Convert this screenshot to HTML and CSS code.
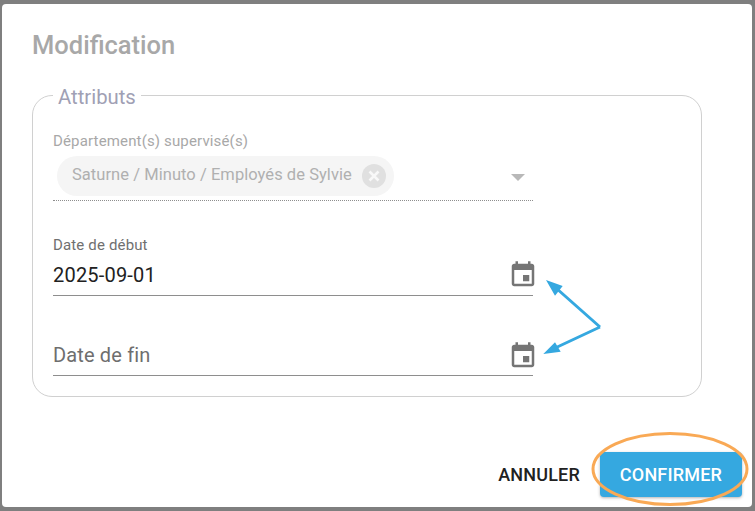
FILE: index.html
```html
<!DOCTYPE html>
<html lang="fr">
<head>
<meta charset="utf-8">
<title>Modification</title>
<link rel="stylesheet" href="styles.css">
</head>
<body>
<div class="dialog">
  <h2 class="title">Modification</h2>
  <fieldset class="group">
    <legend class="legend">Attributs</legend>
    <div class="field field-select">
      <div class="label">Département(s) supervisé(s)</div>
      <div class="select-row">
        <span class="chip">
          <span class="chip-text">Saturne / Minuto / Employés de Sylvie</span>
          <svg class="chip-x" viewBox="0 0 24 24"><circle cx="12" cy="12" r="12" fill="#e0e0e0"/><path d="M7.5 7.5l9 9M16.500 7.500l-9 9" stroke="#f8f8f8" stroke-width="2.600" fill="none"/></svg>
        </span>
        <span class="caret"></span>
      </div>
    </div>
    <div class="field field-date">
      <div class="label label-dark">Date de début</div>
      <div class="date-row">
        <span class="value">2025-09-01</span>
        <svg class="cal" viewBox="0 0 24 24"><path fill="#757575" d="M19 3h-1V1h-2v2H8V1H6v2H5c-1.110 0-2 .9-2 2v14c0 1.100.89 2 2 2h14c1.100 0 2-.9 2-2V5c0-1.100-.9-2-2-2zm0 16H5V8h14v11zM17 12h-5v5h5v-5z"/></svg>
      </div>
    </div>
    <div class="field field-end">
      <div class="date-row">
        <span class="placeholder">Date de fin</span>
        <svg class="cal" viewBox="0 0 24 24"><path fill="#757575" d="M19 3h-1V1h-2v2H8V1H6v2H5c-1.110 0-2 .9-2 2v14c0 1.100.89 2 2 2h14c1.100 0 2-.9 2-2V5c0-1.100-.9-2-2-2zm0 16H5V8h14v11zM17 12h-5v5h5v-5z"/></svg>
      </div>
    </div>
  </fieldset>
  <div class="actions">
    <button class="btn btn-text">ANNULER</button>
    <button class="btn btn-primary">CONFIRMER</button>
  </div>
</div>
<svg class="annotations" viewBox="0 0 755 511" width="755" height="511">
  <path d="M600 327L556 288M600 327L553 349" stroke="#35a8e0" stroke-width="3" fill="none"/>
  <path d="M546 280L562.700 286L555 295.700Z M543.300 354L555 342.300L560.700 351.700Z" fill="#35a8e0"/>
  <ellipse cx="670" cy="469" rx="77" ry="35.500" stroke="#f9a955" stroke-width="3" fill="none"/>
</svg>
</body>
</html>
```
FILE: styles.css
```css
html, body {
  margin: 0;
  height: 100%;
}
body {
  background: #7f7f7f;
  overflow: hidden;
  font-family: Roboto, "Liberation Sans", sans-serif;
}
.dialog {
  box-sizing: border-box;
  margin: 4px 3px 0 2px;
  height: 503px;
  background: #fff;
  border-radius: 4px;
  padding: 27px 10px 10px 30px;
  display: flex;
  flex-direction: column;
}
.title {
  margin: 0;
  font-size: 25.500px;
  line-height: 28px;
  font-weight: 500;
  color: #a8a8a8;
}
.group {
  margin: 23px 40px 0 0;
  padding: 0 20px;
  height: 315px;
  box-sizing: border-box;
  border: 1px solid #d0d0d0;
  border-radius: 20px;
  min-width: 0;
}
.legend {
  margin-left: 0;
  padding: 4px 5px 0;
  font-size: 20.300px;
  line-height: 23px;
  color: #a0a0b4;
}
.field {
  width: 480px;
}
.field-select {
  margin-top: 23px;
  border-bottom: 1px dotted #8e8e8e;
  height: 69px;
  box-sizing: border-box;
}
.label {
  font-size: 15px;
  line-height: 18px;
  color: #a8a8a8;
  letter-spacing: .15px;
}
.label-dark {
  color: #707070;
}
.select-row {
  margin-top: 6px;
  padding-left: 4px;
  display: flex;
  align-items: center;
  justify-content: space-between;
}
.chip {
  display: flex;
  align-items: center;
  height: 40px;
  padding: 0 8px 0 15px;
  border-radius: 20px;
  background: #f5f5f5;
}
.chip-text {
  font-size: 16.500px;
  letter-spacing: .05px;
  color: #b0b0b0;
  margin-right: 10px;
  padding-bottom: 4px;
}
.chip-x {
  width: 24px;
  height: 24px;
  display: block;
}
.caret {
  margin-right: 8px;
  margin-top: 3px;
  width: 0;
  height: 0;
  border-left: 7px solid transparent;
  border-right: 7px solid transparent;
  border-top: 7px solid #b8b8b8;
}
.field-date {
  margin-top: 35px;
  height: 60px;
  box-sizing: border-box;
  border-bottom: 1px solid #8e8e8e;
}
.date-row {
  display: flex;
  align-items: center;
  justify-content: space-between;
  height: 40px;
}
.field-date .date-row {
  height: 42px;
}
.value {
  font-size: 20px;
  letter-spacing: .2px;
  color: #212121;
}
.placeholder {
  font-size: 20px;
  letter-spacing: .15px;
  color: #6e6e6e;
}
.cal {
  width: 30px;
  height: 30px;
  display: block;
  margin-right: -5px;
}
.field-end {
  margin-top: 20px;
  height: 60px;
  box-sizing: border-box;
  border-bottom: 1px solid #8e8e8e;
  display: flex;
  align-items: flex-end;
}
.field-end .date-row {
  width: 100%;
}
.field-end .cal {
  margin-top: 2px;
}
.actions {
  margin-top: auto;
  display: flex;
  justify-content: flex-end;
  align-items: center;
  gap: 20px;
}
.btn {
  font-family: inherit;
  font-size: 18px;
  letter-spacing: .2px;
  font-weight: 500;
  border: 0;
  background: none;
  padding: 0;
  cursor: pointer;
}
.btn-text {
  color: #212121;
}
.btn-primary {
  width: 142px;
  height: 45px;
  border-radius: 4px;
  background: #35a8e0;
  color: #fff;
  box-shadow: 0 1px 3px rgba(0, 0, 0, .3);
}
.annotations {
  position: absolute;
  left: 0;
  top: 0;
  pointer-events: none;
}
```
